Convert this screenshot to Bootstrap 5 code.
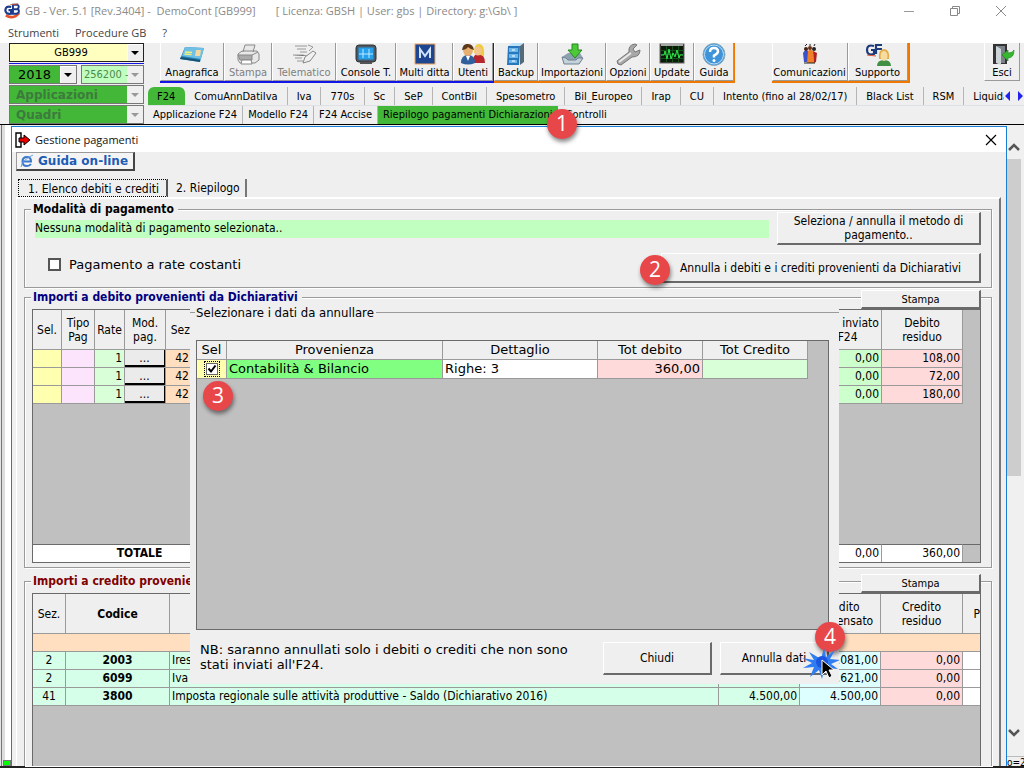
<!DOCTYPE html>
<html lang="it">
<head>
<meta charset="utf-8">
<meta name="viewport" content="width=device-width, initial-scale=1">
<title>GB - Gestione pagamenti</title>
<link rel="stylesheet" href="https://cdn.jsdelivr.net/npm/bootstrap@5.3.0/dist/css/bootstrap.min.css">
<style>
:root{--face:#efefef;--line:#9a9a9a;--dark:#6a6a6a;--green:#43b838;--tahoma:"DejaVu Sans Condensed","DejaVu Sans",sans-serif;--verdana:"DejaVu Sans",Verdana,sans-serif;--segoe:"Open Sans","Noto Sans",sans-serif}
body{height:100vh;overflow:hidden;background:var(--face);color:#000;font:11px/14px var(--tahoma)}
button,select,input{font:inherit;color:inherit;border-radius:0}
a{color:inherit;text-decoration:none}
.app-title{font:11px/22px var(--segoe);color:#8a8a8a;white-space:pre}
.app-menu{font:11px/21px var(--segoe);color:#444}
.cap-btn{border:0;background:none;padding:0;width:46px;height:22px}
/* left selectors */
.side{width:148px;padding:0 4px 0 9px;row-gap:1px}
.combo{appearance:none;border:1px solid #777;height:19px;width:100%;padding:0 17px 0 6px;line-height:16px;
 background:url("data:image/svg+xml,%3Csvg xmlns='http://www.w3.org/2000/svg' width='16' height='17'%3E%3Crect width='16' height='17' fill='%23efefef'/%3E%3Cpath d='M0 17V0h16' fill='none' stroke='%23fff' stroke-width='2'/%3E%3Cpath d='M4 7h8l-4 4z'/%3E%3C/svg%3E") no-repeat right center #fff}
.combo:disabled{opacity:1;color:#4c8a4c;background-image:url("data:image/svg+xml,%3Csvg xmlns='http://www.w3.org/2000/svg' width='16' height='17'%3E%3Crect width='16' height='17' fill='%23efefef'/%3E%3Cpath d='M4 7h8l-4 4z' fill='%23999'/%3E%3C/svg%3E")}
.combo-firm{background-color:#ffffc0;text-align-last:center;border-color:#222}
.firm-wrap{border-bottom:1px solid #1414e6;padding-bottom:1px}
.combo-year{background-color:var(--green);font:13px/16px var(--verdana);padding-left:8px}
.combo-code{background-color:#c0ffc0;padding-left:2px;padding-right:15px}
.combo-nav{background-color:var(--green);font:bold 12px/16px var(--verdana);color:#3d7a3d!important}
/* toolbar */
.tool{display:flex;flex-direction:column;align-items:center;justify-content:flex-end;flex:none;height:38px;padding:0;border:0;border-right:1px solid var(--line);border-bottom:1px solid var(--line);border-left:1px solid #fff;background:var(--face);white-space:nowrap}
.tool svg{width:26px;height:23px;display:block}
.tool:disabled{color:#808080}
.t36{width:36px}.t40{width:40px}.t44{width:44px}.t48{width:48px}.t57{width:57px}.t60{width:60px}.t64{width:64px}.t68{width:68px}.t76{width:76px}
.exit{margin-left:38px}
.set-blue{border:solid #1414e6;border-width:0 1px 2px 0}
.set-orange{border:solid #f07800;border-width:0 1px 2px 0}
.set-last{border-right-width:2px}
/* tab strips */
.strip{height:18px;white-space:nowrap;overflow:hidden}
.strip a{display:block;line-height:19px;padding:0 9px;border-right:1px solid #b5b5b5}
.strip .on{background:var(--green);border-right:0;border-radius:6px 6px 0 0;padding-right:10px}
.strip2 a{line-height:17px;padding:0 5px}
.strip2 .on{border-radius:0;padding:0 5px}
.strip2 .on + a{padding-left:8px}
.chip{position:absolute;z-index:5;width:30px;height:30px;border-radius:50%;background:#e8474a;color:#fff;font:21px/29px var(--segoe);text-align:center;box-shadow:1px 3px 4px #0007}
.chip1{left:399px;top:3px}.chip2{left:-21px;top:2px}.chip3{left:13px;top:78px}.chip4{right:-16px;top:-20px}
/* workspace */
.work{border-top:1px solid #000;border-bottom:2px solid #222}
.gutter{width:11px;background:linear-gradient(90deg,#e4e4e4 1px,#777 1px 2px,#ddd 2px 5px,#fff 5px)}
.lamp{width:8px;height:6px;background:#0f0;border:1px solid #777}
.win{border:solid #1a7fd4;border-width:1px 1px 0;margin-top:1px;background:var(--face)}
.win-head{background:#fff;height:25px;font:11px/24px var(--segoe);color:#111;padding:0 8px 0 3px}
.guide{border:1px solid #999;border-right:2px solid #444;border-bottom:2px solid #444;background:#f4f4f4;font:bold 12px/15px var(--verdana);color:#1c5cb4;height:19px;padding:0 5px 0 3px}
.vtext{font:13px/15px var(--verdana)}
.tabs a{height:18px;font:12px/18px var(--tahoma)}
.tabs{padding-left:6px}
.tabs .sel{border:1px dotted #000;padding:0 7px 0 9px;border-right:2px solid #555}
.tabs .oth{border-right:2px solid #777;padding:0 5px 0 8px}
.pane{border:solid #fff;border-width:2px 0 0 1px;border-right:2px solid #777;margin:0 5px 0 4px;padding:10px 7px 0 7px;flex:1;min-height:0}
.group{border:1px solid var(--line);box-shadow:1px 1px 0 #fff,inset 1px 1px 0 #fff;padding:0 10px 0 7px;margin-bottom:9px}
.group-head{height:19px;margin-top:-8px}
.group-head-low{height:10px}
.group-title{background:var(--face);font:bold 12px/14px var(--tahoma);margin-left:-1px;padding:0 4px 0 2px;height:14px}
.navy{color:#000080}.maroon{color:#800000}
.push{background:var(--face);border:1px solid #fff;border-right:2px solid var(--dark);border-bottom:2px solid var(--dark);padding:0;font:12px/14px var(--tahoma)}
.print{width:120px;height:19px;font-size:11px;line-height:13px}
.pay{width:204px;height:33px}.cancel{width:320px;height:30px}.dlg{width:109px;height:33px}
.banner{background:#c0ffc0;height:18px;font:12px/16px var(--tahoma);flex:1;margin:0 8px 0 3px}
.tick{appearance:none;width:13px;height:13px;border:2px solid #555;background:#fff;margin:0}
/* grids */
.sheet{background:#c0c0c0;border:1px solid var(--dark);overflow:hidden}
.sheet table{table-layout:fixed;width:100%;border-collapse:separate;border-spacing:0;margin:0}
.sheet th,.sheet td{border:solid var(--line);border-width:0 1px 1px 0;padding:0 2px;overflow:hidden;white-space:nowrap;font-size:12px;line-height:14px;text-align:center}
.sheet th{background:var(--face);font-weight:400}
.sheet td{height:18px;line-height:15px}
.sheet .r{text-align:right}.sheet .l{text-align:left}
.sheet .void{background:#c0c0c0;border:0}
.sheet .h40 th{height:40px}.sheet .h19 th,.sheet .h19 td{height:19px;font:13px/16px var(--verdana)}
.c-y{background:#ffffb0}.c-p{background:#fce4fc}.c-g{background:#d8ffd8}.c-o{background:#ffdfc0}.c-lg{background:#ccffcc}.c-r{background:#ffdada}.c-m{background:#d6ffea}.c-c{background:#deffff}.c-w{background:#fff}.c-gg{background:#80ff80}
.cell-btn{display:block;width:100%;height:17px;border:solid #000;border-width:0 1px 2px 0;background:#ebebeb;padding:0;line-height:14px}
.k17{width:17px}.k29{width:29px}.k33{width:33px}.k30{width:30px}.k41{width:41px}.k81{width:81px}.k82{width:82px}.k104{width:104px}.k105{width:105px}.k155{width:155px}.k20{width:20px}
.deb{height:254px}
.sheet .total td{border-top:1px solid var(--dark);border-bottom:0;height:18px}
.cred{flex:1;border-bottom:0}
.sheet td.pickcell{padding:0}
.chk{appearance:none;display:block;width:12px;height:12px;margin:0 auto;border:1px solid #666;outline:1px dotted #000;outline-offset:1px;background:url("data:image/svg+xml,%3Csvg xmlns='http://www.w3.org/2000/svg' viewBox='0 0 10 10'%3E%3Cpath d='M1.500 4.500l2.500 3 4.500-6' fill='none' stroke='%23000' stroke-width='2'/%3E%3C/svg%3E") #fff}
/* dialog laid over the grids */
.over{position:absolute;z-index:3;left:178px;right:167px;top:176px;background:var(--face);padding:2px 10px 10px 6px;height:381px}
.over-head{font:13px/16px var(--tahoma);height:28px}
.over-head::before,.over-head::after{content:"";border-top:1px solid var(--line);align-self:flex-start;margin-top:7px}
.over-head::before{width:5px;margin-left:-6px;margin-right:1px}.over-head::after{flex:1;margin:7px -10px 0 2px}
.over-grid{height:290px;margin-top:7px}
.burst{position:absolute;z-index:6;right:-12px;top:3px;width:40px;height:36px}
.sbar{width:17px;background:#f0f0f0}
.thumb{width:14px;height:317px;background:#cdcdcd}
.foot{font-size:10px;line-height:12px;border-top:1px solid #bbb;overflow:hidden;height:10px;white-space:nowrap}
</style>
</head>
<body class="d-flex flex-column">
<header class="bg-white flex-shrink-0">
  <div class="d-flex justify-content-between align-items-start">
    <div class="d-flex align-items-center ps-1">
      <svg class="me-1" width="17" height="20" viewBox="0 0 19 20"><path d="M2 15q8 5 15-3" fill="none" stroke="#e4552c" stroke-width="3"/><path d="M8 5.500Q2 4 1.500 9q0 5 6.500 4V9H5" fill="none" stroke="#1d3c8c" stroke-width="2.500"/><path d="M10 13V3h5q3 2 0 5h-4 5q2 4-2 5z" fill="none" stroke="#1d3c8c" stroke-width="2.200"/><path d="M7 3l9-1" stroke="#e4552c"/></svg>
      <span class="app-title">GB - Ver. 5.1 [Rev.3404] -  DemoCont [GB999]       [ Licenza: GBSH | User: gbs | Directory: g:\Gb\ ]</span>
    </div>
    <div class="d-flex">
      <button class="cap-btn" aria-label="Riduci"><svg width="12" height="12"><path d="M1 6.500h10" stroke="#999"/></svg></button>
      <button class="cap-btn" aria-label="Ripristina"><svg width="12" height="12"><path d="M1.500 3.500h7v7h-7zM3.500 3.500v-2h7v7h-2" fill="none" stroke="#888"/></svg></button>
      <button class="cap-btn" aria-label="Chiudi finestra"><svg width="12" height="12"><path d="M1 1l10 10M11 1L1 11" stroke="#888"/></svg></button>
    </div>
  </div>
  <nav class="app-menu d-flex gap-3 ps-2"><a href="#">Strumenti</a><a href="#">Procedure GB</a><a href="#">?</a></nav>
</header>

<div class="d-flex flex-shrink-0">
  <div class="side d-flex flex-column flex-shrink-0">
    <div class="firm-wrap"><select class="combo combo-firm d-block" aria-label="Ditta"><option>GB999</option></select></div>
    <div class="d-flex gap-1"><select class="combo combo-year" aria-label="Anno"><option>2018</option></select><select class="combo combo-code" disabled aria-label="Codice"><option>256200 -</option></select></div>
    <select class="combo combo-nav" disabled aria-label="Applicazioni"><option>Applicazioni</option></select>
    <select class="combo combo-nav" disabled aria-label="Quadri"><option>Quadri</option></select>
  </div>
  <div class="flex-fill position-relative overflow-visible" style="min-width:0">
    <div class="d-flex justify-content-between ps-2 pe-1">
      <div class="d-flex ms-1">
        <div class="d-flex set-blue">
          <button class="tool t64"><svg viewBox="0 0 26 23"><path d="M6 4l19 1-4 14L1 16z" fill="#2c86b8"/><path d="M6 4l19 1-3 11L3 13z" fill="#6fc0e4"/><path d="M2 14l19 3v2L1 16z" fill="#155478"/><path d="M17 7h5l-1 6h-5z" fill="#f2d9a0"/><path d="M6 9l7 .5M5.500 11l7 .6" stroke="#f4f27a" stroke-width="1.300"/></svg>Anagrafica</button>
          <button class="tool t48" disabled><svg viewBox="0 0 26 23"><path d="M8 9l2-7h10l-2 7M3 11l4-3h15l2 3v6l-4 3H5l-2-3z" fill="#e8e8e8" stroke="#888"/><path d="M3 12h14v5H5zM17 12l6-3" fill="#aaa" stroke="#888"/><path d="M7 17l-1 4h11l-1-4z" fill="#fff" stroke="#888"/></svg>Stampa</button>
          <button class="tool t64" disabled><svg viewBox="0 0 26 23"><path d="M4 3h12M6 6h9M9 9h7M2 12h10l4 1M4 15h7M6 18h6" stroke="#999"/><path d="M12 20l2-6 8-6 3 2-6 8z" fill="#f0f0f0" stroke="#888"/><path d="M17 2l5 2-4 4" fill="none" stroke="#999"/></svg>Telematico</button>
          <button class="tool t60"><svg viewBox="0 0 26 23"><rect x="3" y="2" width="20" height="17" rx="3" fill="#4b5a66" stroke="#333"/><rect x="5.500" y="4.500" width="15" height="12" fill="#25a0ee"/><path d="M6 11h14M10 6v9M16 6v9" stroke="#bfeaff"/><path d="M7 20h12" stroke="#555" stroke-width="2"/></svg>Console T.</button>
          <button class="tool t57"><svg viewBox="0 0 26 23"><rect x="3" y="1" width="20" height="20" fill="#1d4590" stroke="#f0a860"/><path d="M8 15V6l5 7 5-7v9" fill="none" stroke="#cfe4fa" stroke-width="2"/></svg>Multi ditta</button>
          <button class="tool t40"><svg viewBox="0 0 26 23"><path d="M12 20q1-9 6-9 7 0 7 9z" fill="#b8262c"/><path d="M14 10q0-9 5-9 6 0 5 12l-4-1z" fill="#f0cc3c"/><ellipse cx="18" cy="8" rx="3.500" ry="4.500" fill="#f3c48e"/><path d="M1 20q0-8 7-8t7 8q-7 3-14 0z" fill="#2f5f9c"/><ellipse cx="8" cy="7" rx="5" ry="6" fill="#e8b070"/><path d="M2 7q1-7 6-6 5 0 6 6-4-1-6-3Q6 7 2 7z" fill="#5c3818"/><path d="M6 13l2 5 2-5" fill="#fff"/></svg>Utenti</button>
        </div>
        <div class="d-flex set-orange">
          <button class="tool t44"><svg viewBox="0 0 26 23"><path d="M5 3l4-3h12l-4 3z" fill="#bfe1f5"/><path d="M17 3l4-3v19l-4 3z" fill="#536a78"/><path d="M5 3h12l-1 19H4z" fill="#2677bb"/><path d="M6 5h9v4H6zM6 11h9v4H6zM6 17h8v3H6z" fill="#6bb7ea"/><path d="M9 7h3M9 13h3M9 18h3" stroke="#fff"/></svg>Backup</button>
          <button class="tool t68"><svg viewBox="0 0 26 23"><path d="M3 14l6-4h12l3 5-4 6H5z" fill="#8ca0b0"/><path d="M3 14l4 1 2 2h8l2-2 5 0-4 6H5z" fill="#c4d2dc" stroke="#71818e"/><path d="M13 1h6v6h4l-7 8-7-8h4z" fill="#4cc838" stroke="#228a1c"/></svg>Importazioni</button>
          <button class="tool t44"><svg viewBox="0 0 26 23"><path d="M2 18L14 9q-1-7 6-8l2 1-4 4 2 3 5-2q0 7-8 7L6 22q-4 0-4-4z" fill="#a8a8a8" stroke="#777"/><path d="M4 19L16 10" stroke="#e8e8e8" stroke-width="2"/></svg>Opzioni</button>
          <button class="tool t44"><svg viewBox="0 0 26 23"><rect x="1" y="1" width="24" height="19" fill="#0b1a0b" stroke="#666"/><path d="M2 2h22" stroke="#a7a7a7" stroke-width="2"/><path d="M2 7.500h22M2 11.500h22M2 15.500h22M7.500 3v16M13.500 3v16M19.500 3v16" stroke="#14521a"/><path d="M2 12h3l1-4 2 8 2-10 2 10 2-6 2 4 2-7 2 8 1-3h3" fill="none" stroke="#2ee84a"/></svg>Update</button>
          <button class="tool t40"><svg viewBox="0 0 26 23"><circle cx="13" cy="11.500" r="11" fill="#3f93d8" stroke="#8ab"/><circle cx="13" cy="11.500" r="9.500" fill="none" stroke="#bfe0f6"/><path d="M9 9q0-4 4-4t4 3.500q0 2-4 4v2" fill="none" stroke="#fff" stroke-width="2.500"/><circle cx="13" cy="17.500" r="1.500" fill="#fff"/></svg>Guida</button>
        </div>
      </div>
      <div class="d-flex set-orange set-last">
        <button class="tool t76"><svg viewBox="0 0 26 23"><path d="M6 10q2-4 5-2v11H7z" fill="#3c50c8"/><path d="M11 8q2-3 5 0l1 12h-7z" fill="#f08028"/><path d="M16 8l4 2-1 9-2 1z" fill="#b02020"/><circle cx="9" cy="6" r="2" fill="#402020"/><circle cx="13" cy="5" r="2" fill="#703010"/><circle cx="17" cy="6" r="2" fill="#222"/><path d="M8 3l2-2M13 3V1M17 3l1-2M7 20h11" stroke="#222"/></svg>Comunicazioni</button>
        <button class="tool t60"><svg viewBox="0 0 26 23"><path d="M9 3Q2 1 2 7t7 4V7H6M11 11V2h6M11 6h6" fill="none" stroke="#1d3c7c" stroke-width="2.200"/><path d="M2 12l9 1" stroke="#e4552c"/><path d="M12 23q0-6 7-6t7 6z" fill="#3f8f45"/><path d="M14 16q-1-10 5-10t5 10z" fill="#e0ae48"/><ellipse cx="19" cy="13" rx="3.500" ry="5" fill="#f6dca0"/></svg>Supporto</button>
      </div>
      <button class="tool t36 exit"><svg viewBox="0 0 26 23"><path d="M4 1h14v20H4z" fill="#333"/><path d="M7 3h9v17H7z" fill="#7a8288"/><path d="M7 3l5 3v16l-5-2z" fill="#cdd4d8"/><path d="M13 12l6-5v3q5 0 6-3 0 8-6 8v3z" fill="#35b82f" stroke="#1b7a18" stroke-width=".6"/></svg>Esci</button>
    </div>
    <div class="d-flex align-items-center pt-1">
      <nav class="strip d-flex flex-fill" style="min-width:0">
        <a href="#" class="on">F24</a><a href="#">ComuAnnDatiIva</a><a href="#">Iva</a><a href="#">770s</a><a href="#">Sc</a><a href="#">SeP</a><a href="#">ContBil</a><a href="#">Spesometro</a><a href="#">Bil_Europeo</a><a href="#">Irap</a><a href="#">CU</a><a href="#">Intento (fino al 28/02/17)</a><a href="#">Black List</a><a href="#">RSM</a><a href="#">Liquidazioni</a>
      </nav>
      <svg class="flex-shrink-0" width="20" height="10" viewBox="0 0 20 10"><path d="M6 0v10L1 5zM14 0v10l5-5z" fill="#2222ee"/></svg>
    </div>
    <div class="position-relative border-top">
      <nav class="strip strip2 d-flex"><a href="#">Applicazione F24</a><a href="#">Modello F24</a><a href="#">F24 Accise</a><a href="#" class="on">Riepilogo pagamenti Dichiarazioni</a><a href="#" class="border-0">Controlli</a></nav>
      <span class="chip chip1">1</span>
    </div>
  </div>
</div>

<div class="work d-flex flex-fill" style="min-height:0">
  <div class="gutter flex-shrink-0 d-flex align-items-end justify-content-end"><span class="lamp"></span></div>
  <section class="win d-flex flex-column flex-fill position-relative" style="min-width:0">
    <div class="win-head d-flex align-items-center gap-1 flex-shrink-0">
      <svg width="16" height="16" viewBox="0 0 16 16"><path d="M1 1h5v14H1z" fill="#fff" stroke="#000" stroke-width="1.400"/><path d="M4 6h5V3l6 5-6 5v-3H4z" fill="#e80000" stroke="#000"/></svg>
      <span class="flex-fill">Gestione pagamenti</span>
      <button class="border-0 bg-transparent p-0 d-flex" aria-label="Chiudi Gestione pagamenti"><svg width="14" height="14"><path d="M2 2l10 10M12 2L2 12" stroke="#000" stroke-width="1.200"/></svg></button>
    </div>
    <div class="ps-1"><button class="guide d-flex align-items-center gap-1"><svg width="14" height="14" viewBox="0 0 14 14"><path d="M3.500 7.500h7.500q0-4.500-4-4.500-4.500 0-4.500 4.500T7 12q2.500 0 4-2" fill="none" stroke="#3a78cc" stroke-width="2"/><path d="M1 13Q2 6 13 1" fill="none" stroke="#6aa0e0"/></svg>Guida on-line</button></div>
    <nav class="tabs d-flex mt-2"><a href="#" class="sel">1. Elenco debiti e crediti</a><a href="#" class="oth">2. Riepilogo</a></nav>
    <div class="pane d-flex flex-column">
      <div class="group" role="group" aria-label="Modalità di pagamento">
        <div class="group-head group-head-low d-flex"><span class="group-title">Modalità di pagamento</span></div>
        <div class="d-flex"><div class="banner mt-2">Nessuna modalità di pagamento selezionata..</div><button class="push pay">Seleziona / annulla il metodo di pagamento..</button></div>
        <div class="d-flex justify-content-between align-items-start pt-2 pb-1">
          <label class="vtext d-flex align-items-center ps-3 pt-1"><input type="checkbox" class="tick me-2">Pagamento a rate costanti</label>
          <div class="position-relative"><button class="push cancel d-block">Annulla i debiti e i crediti provenienti da Dichiarativi</button><span class="chip chip2">2</span></div>
        </div>
      </div>

      <div class="group pb-1" role="group" aria-label="Importi a debito">
        <div class="group-head d-flex justify-content-between"><span class="group-title navy">Importi a debito provenienti da Dichiarativi</span><button class="push print">Stampa</button></div>
        <div class="sheet deb d-flex flex-column justify-content-between">
          <table>
            <colgroup><col class="k29"><col class="k33"><col class="k30"><col class="k41"><col class="k33"><col><col class="k81"><col class="k81"><col class="k17"></colgroup>
            <tr class="h40"><th>Sel.</th><th>Tipo<br>Pag</th><th>Rate</th><th>Mod.<br>pag.</th><th>Sez.</th><th></th><th>Debito inviato<br>in F24</th><th>Debito<br>residuo</th><th class="void"></th></tr>
            <tr><td class="c-y"></td><td class="c-p"></td><td class="c-g r">1</td><td class="p-0"><button class="cell-btn">...</button></td><td class="c-o">42</td><td></td><td class="c-lg r">0,00</td><td class="c-r r">108,00</td><td class="void"></td></tr>
            <tr><td class="c-y"></td><td class="c-p"></td><td class="c-g r">1</td><td class="p-0"><button class="cell-btn">...</button></td><td class="c-o">42</td><td></td><td class="c-lg r">0,00</td><td class="c-r r">72,00</td><td class="void"></td></tr>
            <tr><td class="c-y"></td><td class="c-p"></td><td class="c-g r">1</td><td class="p-0"><button class="cell-btn">...</button></td><td class="c-o">42</td><td></td><td class="c-lg r">0,00</td><td class="c-r r">180,00</td><td class="void"></td></tr>
          </table>
          <table class="total">
            <colgroup><col class="k29"><col class="k155"><col><col class="k81"><col class="k81"><col class="k17"></colgroup>
            <tr><td class="c-w border-end-0"></td><td class="c-w fw-bold border-end-0">TOTALE</td><td class="c-w"></td><td class="c-w r">0,00</td><td class="c-w r">360,00</td><td class="border-end-0"></td></tr>
          </table>
        </div>
      </div>

      <div class="group d-flex flex-column flex-fill border-bottom-0 mb-0 mt-1" role="group" aria-label="Importi a credito">
        <div class="group-head d-flex justify-content-between flex-shrink-0"><span class="group-title maroon">Importi a credito provenienti da Dichiarativi</span><button class="push print">Stampa</button></div>
        <div class="sheet cred">
          <table>
            <colgroup><col class="k33"><col class="k104"><col><col class="k81"><col class="k81"><col class="k82"><col class="k17"></colgroup>
            <tr class="h40"><th>Sez.</th><th class="fw-bold">Codice</th><th></th><th></th><th>Credito<br>compensato</th><th>Credito<br>residuo</th><th class="r border-end-0 pe-0">P</th></tr>
            <tr><td class="c-o border-end-0" colspan="7"></td></tr>
            <tr><td class="c-m">2</td><td class="c-m fw-bold">2003</td><td class="c-m l">Ires saldo (Dichiarativo 2016)</td><td class="c-m"></td><td class="c-c r">2.081,00</td><td class="c-r r">0,00</td><td class="c-w border-end-0"></td></tr>
            <tr><td class="c-m">2</td><td class="c-m fw-bold">6099</td><td class="c-m l">Iva annuale saldo (Dichiarativo 2016)</td><td class="c-m"></td><td class="c-c r">2.621,00</td><td class="c-r r">0,00</td><td class="c-w border-end-0"></td></tr>
            <tr><td class="c-m">41</td><td class="c-m fw-bold">3800</td><td class="c-m l">Imposta regionale sulle attività produttive - Saldo (Dichiarativo 2016)</td><td class="c-m r">4.500,00</td><td class="c-c r">4.500,00</td><td class="c-r r">0,00</td><td class="c-w border-end-0"></td></tr>
          </table>
        </div>
      </div>
    </div>

    <div class="over" role="dialog" aria-label="Selezionare i dati da annullare">
      <div class="over-head d-flex">Selezionare i dati da annullare</div>
      <div class="sheet over-grid">
        <table class="h19">
          <colgroup><col class="k30"><col><col class="k155"><col class="k105"><col class="k105"><col class="k20"></colgroup>
          <tr><th>Sel</th><th>Provenienza</th><th>Dettaglio</th><th>Tot debito</th><th>Tot Credito</th><th class="void"></th></tr>
          <tr><td class="pickcell c-y"><input type="checkbox" class="chk" checked aria-label="Seleziona Contabilità &amp; Bilancio"></td><td class="c-gg l">Contabilità &amp; Bilancio</td><td class="c-w l">Righe: 3</td><td class="c-r r">360,00</td><td class="c-g"></td><td class="void"></td></tr>
        </table>
      </div>
      <span class="chip chip3">3</span>
      <div class="d-flex align-items-start gap-2 pt-2 mt-1">
        <div class="vtext flex-fill ps-1 pe-3">NB: saranno annullati solo i debiti o crediti che non sono stati inviati all'F24.</div>
        <button class="push dlg flex-shrink-0">Chiudi</button>
        <div class="position-relative flex-shrink-0"><button class="push dlg">Annulla dati</button>
          <svg class="burst" viewBox="0 0 40 36"><path d="M20 14l3-11 2 9 9-7-5 9 10 1-9 4 7 5-10-1 3 8-7-6-2 9-3-9-9 7 4-10-11 1 9-5-10-5 12 2-5-8z" fill="#2f7df0"/><circle cx="21" cy="17" r="6" fill="#1c55e0"/><path d="M21 15v15l4-4 3 7 3-2-3-6h5z" fill="#000" stroke="#fff"/></svg>
          <span class="chip chip4">4</span></div>
      </div>
    </div>
  </section>
  <div class="sbar d-flex flex-column flex-shrink-0 justify-content-between">
    <div class="pt-3"><svg class="d-block mb-1" width="14" height="14" viewBox="0 0 14 14"><path d="M2 9l5-5 5 5" fill="none" stroke="#555" stroke-width="2.500"/></svg><div class="thumb"></div></div>
    <div><svg class="d-block mb-3" width="14" height="14" viewBox="0 0 14 14"><path d="M2 4l5 5 5-5" fill="none" stroke="#555" stroke-width="2.500"/></svg><div class="foot">o=2018</div></div>
  </div>
</div>
<script src="https://cdn.jsdelivr.net/npm/bootstrap@5.3.0/dist/js/bootstrap.bundle.min.js"></script>
</body>
</html>
